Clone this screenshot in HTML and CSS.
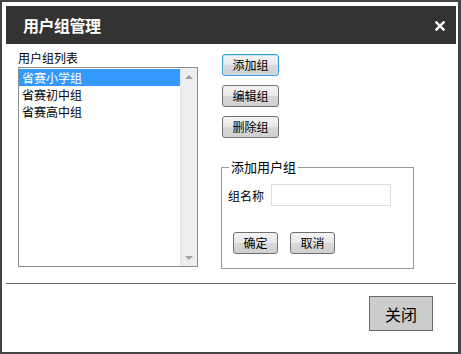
FILE: index.html
```html
<!DOCTYPE html>
<html lang="zh-cn">
	<head>
		<meta http-equiv="Content-Type" content="text/html; charset=utf-8" />
		<title>用户组管理</title>
		<link rel="stylesheet" href="styles.css">
	</head>
	<body>
		<div class="dialog">
			<div class="dlg-head">
				<span class="dlg-title">用户组管理</span>
				<span class="dlg-close">
					<svg width="10" height="10" viewBox="0 0 10 10"><path d="M1.5 1.5 L8.5 8.5 M8.5 1.5 L1.5 8.5" stroke="#fff" stroke-width="2.4" stroke-linecap="square"/></svg>
				</span>
			</div>
			<div class="dlg-body">
				<div class="col-left">
					<div class="list-label">用户组列表</div>
					<div class="listbox">
						<ul class="list-items">
							<li class="on">省赛小学组</li>
							<li>省赛初中组</li>
							<li>省赛高中组</li>
						</ul>
						<div class="scroll">
							<span class="arr up"></span>
							<span class="arr down"></span>
						</div>
					</div>
				</div>
				<div class="col-right">
					<div class="btn-group">
						<button class="btn focus">添加组</button>
						<button class="btn">编辑组</button>
						<button class="btn">删除组</button>
					</div>
					<fieldset class="add-box">
						<legend>添加用户组</legend>
						<div class="name-row">
							<span class="name-label">组名称</span>
							<input class="name-input" type="text">
						</div>
						<div class="ok-row">
							<button class="btn btn-sm">确定</button>
							<button class="btn btn-sm">取消</button>
						</div>
					</fieldset>
				</div>
			</div>
			<div class="dlg-foot">
				<button class="btn-close">关闭</button>
			</div>
		</div>
	</body>
</html>
```

FILE: styles.css
```css
body,ul,li{
	padding:0;
	margin:0;
}
li{
	list-style: none;
}
body{
	font-family: "Noto Sans CJK SC", "Liberation Sans", sans-serif;
	font-size: 12px;
	color: #000;
	background: #fff;
}
.dialog{
	width: 461px;
	height: 354px;
	box-sizing: border-box;
	border: 2px solid #444;
	border-right-width: 3px;
	padding: 4px 2px 0 4px;
	background: #fff;
	display: flex;
	flex-direction: column;
}
.dlg-head{
	height: 38px;
	flex: none;
	background: #333;
	color: #fff;
	display: flex;
	align-items: center;
	justify-content: space-between;
	padding: 0 11px 0 17px;
}
.dlg-title{
	font-size: 16px;
	font-weight: bold;
	letter-spacing: -0.5px;
}
.dlg-close{
	display: flex;
	margin-top: 1px;
}
.dlg-body{
	height: 240px;
	flex: none;
	box-sizing: border-box;
	display: flex;
	padding: 5px 0 0 12px;
	border-bottom: 1px solid #666;
}
.list-label{
	line-height: 18px;
	height: 18px;
}
.listbox{
	width: 180px;
	height: 200px;
	box-sizing: border-box;
	border: 1px solid #8a8d92;
	display: flex;
}
.list-items{
	flex: 1;
	padding-top: 1px;
}
.list-items li{
	line-height: 17px;
	height: 17px;
	padding-left: 3px;
}
.list-items li.on{
	background: #3399ff;
	color: #fff;
}
.scroll{
	width: 17px;
	background: #eee;
	border-left: 1px solid #e4e4e4;
	display: flex;
	flex-direction: column;
	justify-content: space-between;
	align-items: center;
	padding: 7px 0 6px;
	box-sizing: border-box;
}
.arr{
	width: 0;
	height: 0;
	border-left: 4px solid transparent;
	border-right: 4px solid transparent;
}
.arr.up{
	border-bottom: 4px solid #a0a0a0;
}
.arr.down{
	border-top: 4px solid #a0a0a0;
}
.col-right{
	margin-left: 23px;
	display: flex;
	flex-direction: column;
}
.btn-group{
	display: flex;
	flex-direction: column;
	gap: 9px;
	padding: 5px 0 0 1px;
}
.btn{
	width: 57px;
	height: 22px;
	padding: 0;
	border: 1px solid #707070;
	border-radius: 3px;
	background: linear-gradient(#f4f4f4, #e8e8e8 50%, #d8d8d8 51%, #d0d0d0);
	font-family: "Noto Sans CJK SC", "Liberation Sans", sans-serif;
	font-size: 12px;
	color: #000;
	line-height: 18px;
}
.btn.focus{
	border-color: #3c9bd6;
	box-shadow: inset 0 0 0 1px #bfe5fb;
}
.add-box{
	width: 193px;
	height: 110px;
	box-sizing: border-box;
	margin: 21px 0 0;
	padding: 0 6px;
	border: 1px solid #999;
}
.add-box legend{
	font-size: 13px;
	padding: 0 2px;
	margin-left: 1px;
	line-height: 16px;
}
.name-row{
	display: flex;
	align-items: center;
	margin-top: 9px;
}
.name-label{
	margin-right: 7px;
}
.name-input{
	width: 120px;
	height: 22px;
	box-sizing: border-box;
	border: 1px solid #d8dde3;
	margin: 0;
}
.ok-row{
	display: flex;
	gap: 12px;
	margin: 26px 0 0 5px;
}
.btn-sm{
	width: 45px;
}
.dlg-foot{
	flex: 1;
	display: flex;
	justify-content: flex-end;
	align-items: flex-start;
	padding: 12px 23px 0 0;
}
.btn-close{
	width: 64px;
	height: 35px;
	box-sizing: border-box;
	border: 1px solid #6a6a6a;
	background: #ccc;
	font-family: "Noto Sans CJK SC", "Liberation Sans", sans-serif;
	font-size: 16px;
	color: #000;
	padding: 0;
}
```
